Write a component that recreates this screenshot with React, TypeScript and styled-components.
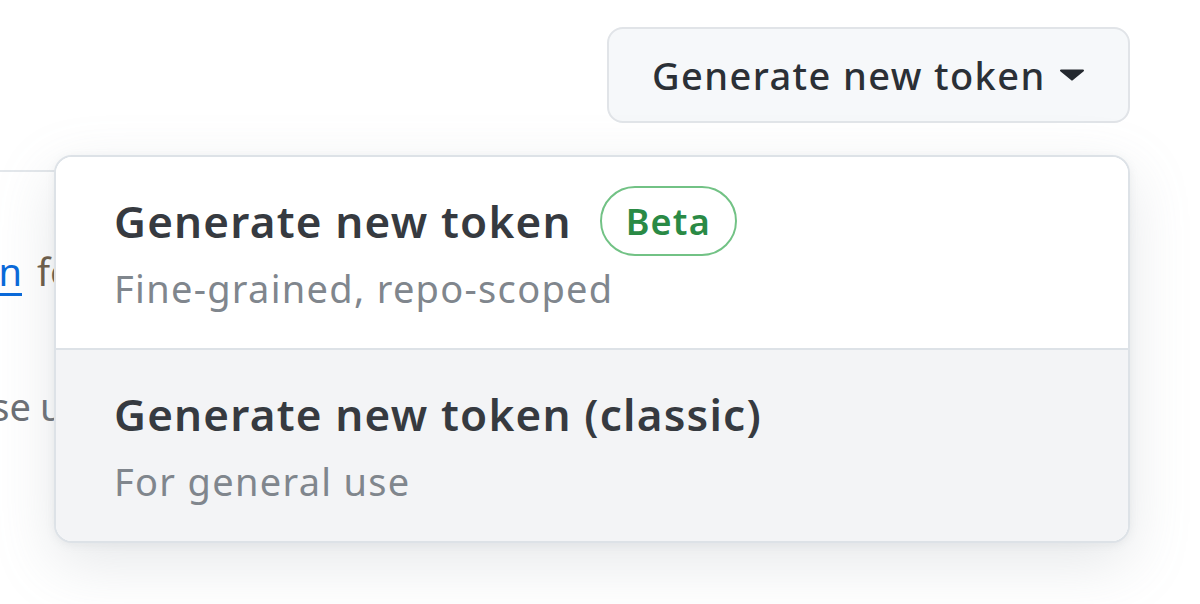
import React from "react";
import styled, { createGlobalStyle } from "styled-components";

const Global = createGlobalStyle`
  html, body { margin: 0; padding: 0; background: #ffffff; }
  body { font-family: "Noto Sans", "Open Sans", Arial, sans-serif; color: #1f2328; }
`;

const Page = styled.div`
  position: relative;
  width: 1200px;
  height: 604px;
  overflow: hidden;
  background: #ffffff;
`;

const Header = styled.div`
  display: flex;
  justify-content: flex-end;
  padding: 27px 70px 0 0;
`;

const MenuAnchor = styled.div`
  position: relative;
  z-index: 2;
`;

const Button = styled.button`
  display: flex;
  align-items: center;
  gap: 14px;
  box-sizing: border-box;
  width: 523px;
  height: 96px;
  padding: 0 0 0 43px;
  background: #f6f8fa;
  border: 2px solid #e1e4e8;
  border-radius: 16px;
  font-family: "Noto Sans", "Open Sans", Arial, sans-serif;
  font-size: 38px;
  letter-spacing: 1.4px;
  font-weight: 500;
  color: #2b3036;
  cursor: pointer;
`;

const Caret = styled.svg`
  width: 24px;
  height: 12px;
  flex: none;
`;

const Menu = styled.div`
  position: absolute;
  top: 128px;
  right: 0;
  width: 1076px;
  box-sizing: border-box;
  background: #ffffff;
  border: 2px solid #dde2e7;
  border-radius: 18px;
  overflow: hidden;
  box-shadow: 0 20px 60px rgba(140, 149, 159, 0.22), 0 2px 8px rgba(140, 149, 159, 0.12);
`;

const Item = styled.div<{ $hover?: boolean }>`
  display: flex;
  flex-direction: column;
  gap: 20px;
  padding: 39px 0 38px 58px;
  background: ${(p) => (p.$hover ? "#f3f4f6" : "#ffffff")};
  & + & {
    border-top: 2px solid #dde2e7;
  }
`;

const TitleRow = styled.div`
  display: flex;
  align-items: center;
  gap: 28px;
  height: 50px;
`;

const Title = styled.span`
  font-size: 44px;
  letter-spacing: 1.2px;
  line-height: 50px;
  font-weight: 600;
  color: #363a40;
  white-space: nowrap;
`;

const Badge = styled.span`
  display: inline-flex;
  align-items: center;
  justify-content: center;
  box-sizing: border-box;
  height: 70px;
  padding: 0 24px;
  border: 2px solid #72c285;
  border-radius: 35px;
  font-size: 36px;
  letter-spacing: 1.2px;
  font-weight: 600;
  color: #2a8a45;
`;

const Desc = styled.span`
  font-size: 38px;
  letter-spacing: 1.3px;
  line-height: 44px;
  color: #80868d;
  white-space: nowrap;
`;

const Section = styled.div`
  margin-top: 47px;
  width: 1050px;
  height: 400px;
  box-sizing: border-box;
  padding-top: 75px;
  border-top: 2px solid #e3e7eb;
`;

const SectionLine = styled.p<{ $gap?: number }>`
  display: flex;
  margin: ${(p) => p.$gap ?? 0}px 0 0 0;
  font-size: 38px;
  line-height: 48px;
  color: #6a5a45;
  white-space: nowrap;
`;

const Lead = styled.span<{ $w: number }>`
  flex: 0 0 ${(p) => p.$w}px;
  min-width: 0;
  display: flex;
  justify-content: flex-end;
  white-space: nowrap;
`;

const Rest = styled.span<{ $gap: number }>`
  margin-left: ${(p) => p.$gap}px;
`;

const Link = styled.a`
  color: #0969da;
  text-decoration: underline;
  text-underline-offset: 7px;
  text-decoration-thickness: 3px;
`;

const Muted = styled.span`
  color: #6b6f75;
`;

export default function App() {
  return (
    <Page>
      <Global />
      <Header>
        <MenuAnchor>
          <Button>
            Generate new token
            <Caret viewBox="0 0 24 12" aria-hidden>
              <path d="M1 0.5 H23 a1 1 0 0 1 0.7 1.7 L12.7 11.3 a1 1 0 0 1 -1.4 0 L0.3 2.2 A1 1 0 0 1 1 0.5 Z" fill="#24292f" />
            </Caret>
          </Button>
          <Menu>
            <Item>
              <TitleRow>
                <Title>Generate new token</Title>
                <Badge>Beta</Badge>
              </TitleRow>
              <Desc>Fine-grained, repo-scoped</Desc>
            </Item>
            <Item $hover>
              <TitleRow>
                <Title>Generate new token (classic)</Title>
              </TitleRow>
              <Desc>For general use</Desc>
            </Item>
          </Menu>
        </MenuAnchor>
      </Header>
      <Section>
        <SectionLine>
          <Lead $w={22}>
            <Link href="#">personal access token</Link>
          </Lead>
          <Rest $gap={15}>for</Rest>
        </SectionLine>
        <SectionLine $gap={87}>
          <Lead $w={31}>
            <Muted>for personal use</Muted>
          </Lead>
          <Rest $gap={9}>
            <Muted>up</Muted>
          </Rest>
        </SectionLine>
      </Section>
    </Page>
  );
}
